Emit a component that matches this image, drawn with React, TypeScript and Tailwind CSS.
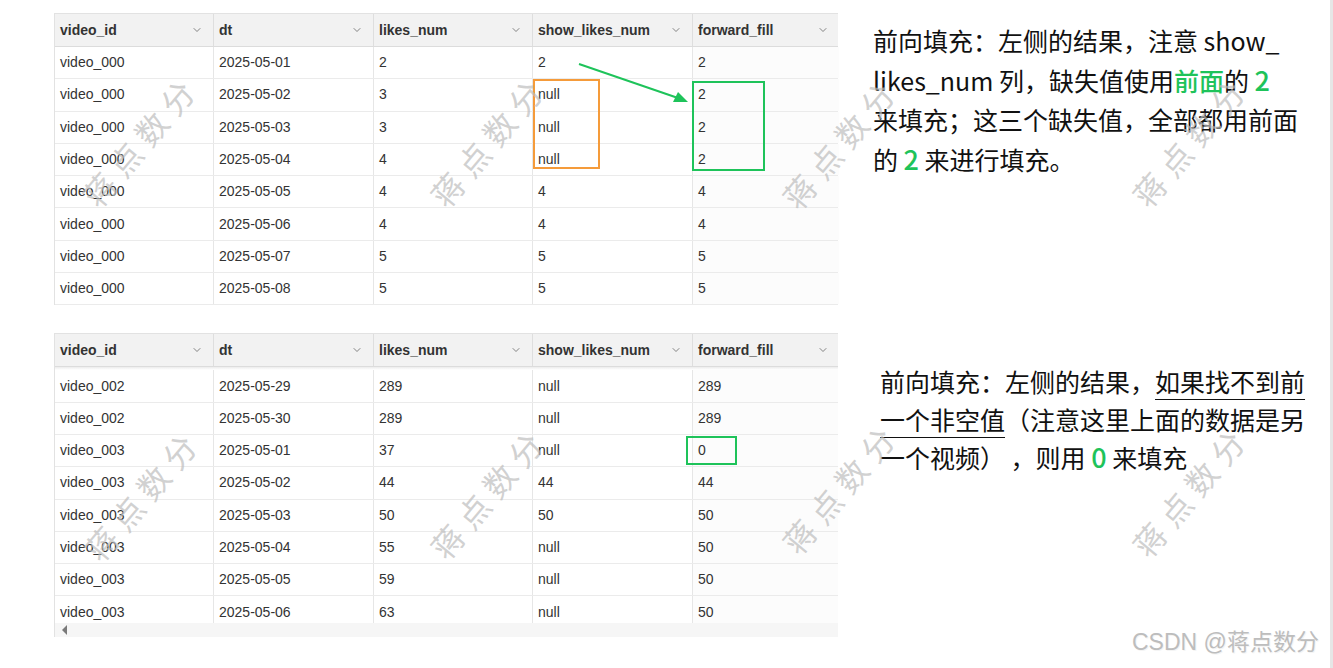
import { ChevronDown } from 'lucide-react';

type Row = [string, string, string, string, string];

const COLUMNS = ['video_id', 'dt', 'likes_num', 'show_likes_num', 'forward_fill'];
const WIDTHS = ['w-[159px]', 'w-[160px]', 'w-[159px]', 'w-[160px]', 'w-[146px]'];

const TOP_ROWS: Row[] = [
  ['video_000', '2025-05-01', '2', '2', '2'],
  ['video_000', '2025-05-02', '3', 'null', '2'],
  ['video_000', '2025-05-03', '3', 'null', '2'],
  ['video_000', '2025-05-04', '4', 'null', '2'],
  ['video_000', '2025-05-05', '4', '4', '4'],
  ['video_000', '2025-05-06', '4', '4', '4'],
  ['video_000', '2025-05-07', '5', '5', '5'],
  ['video_000', '2025-05-08', '5', '5', '5'],
];

const BOTTOM_ROWS: Row[] = [
  ['video_002', '2025-05-29', '289', 'null', '289'],
  ['video_002', '2025-05-30', '289', 'null', '289'],
  ['video_003', '2025-05-01', '37', 'null', '0'],
  ['video_003', '2025-05-02', '44', '44', '44'],
  ['video_003', '2025-05-03', '50', '50', '50'],
  ['video_003', '2025-05-04', '55', 'null', '50'],
  ['video_003', '2025-05-05', '59', 'null', '50'],
  ['video_003', '2025-05-06', '63', 'null', '50'],
];

const MARKS = [
  { x: 140, y: 140 }, { x: 488, y: 140 }, { x: 840, y: 142 }, { x: 1190, y: 140 },
  { x: 142, y: 494 }, { x: 488, y: 492 }, { x: 840, y: 487 }, { x: 1190, y: 490 },
];

function HeaderRow() {
  return (
    <div className="flex h-[33px] bg-[#f2f2f2] border-b border-[#dcdcdc]">
      {COLUMNS.map((c, i) => (
        <div
          key={c}
          className={`${WIDTHS[i]} shrink-0 flex items-center justify-between pl-[5px] pr-[10px] ${i < 4 ? 'border-r border-[#dedede]' : ''}`}
        >
          <span className="font-bold text-[14px] text-[#333]">{c}</span>
          <ChevronDown className="w-3 h-3 text-[#666]" strokeWidth={1.6} />
        </div>
      ))}
    </div>
  );
}

function BodyRow({ row }: { row: Row }) {
  return (
    <div className="flex h-[32.3px] border-b border-[#ebebeb] bg-white">
      {row.map((v, i) => (
        <div
          key={i}
          className={`${WIDTHS[i]} shrink-0 flex items-center pl-[5px] text-[14px] text-[#333] ${i < 4 ? 'border-r border-[#e6e6e6]' : 'bg-[#fcfcfc]'}`}
        >
          {v}
        </div>
      ))}
    </div>
  );
}

export default function App() {
  return (
    <div className="relative w-[1333px] h-[668px] overflow-hidden bg-white font-['Liberation_Sans',Arial,sans-serif]">
      <div className="flex h-full">
        <div className="flex-1 flex flex-col">
          {/* first table + note */}
          <div className="flex pt-[13px]">
            <div className="ml-[54px] w-[784px] border-l border-t border-[#e2e2e2]">
              <HeaderRow />
              {TOP_ROWS.map((r, i) => <BodyRow key={i} row={r} />)}
            </div>
            <div className="ml-[35px] mt-[8px] text-[25px] leading-[39px] text-[#111] font-['Noto_Sans_CJK_SC','Noto_Sans',sans-serif]">
              前向填充：左侧的结果，注意 show_<br />
              likes_num 列，缺失值使用<span className="text-[#1ec35a] font-medium">前面</span>的 <span className="text-[#1ec35a] text-[27px] font-medium">2</span><br />
              来填充；这三个缺失值，全部都用前面<br />
              的 <span className="text-[#1ec35a] text-[27px] font-medium">2</span> 来进行填充。
            </div>
          </div>

          {/* second table + note */}
          <div className="flex mt-[28px]">
            <div className="ml-[54px] w-[784px] border-l border-t border-[#e2e2e2]">
              <HeaderRow />
              <div className="h-[3px] bg-gradient-to-b from-[#ececec] to-white" />
              <div className="h-[253px] overflow-hidden">
                {BOTTOM_ROWS.map((r, i) => <BodyRow key={i} row={r} />)}
              </div>
              <div className="h-[14px] bg-[#f6f6f6] flex items-center pl-[7px]">
                <span className="w-0 h-0 border-y-[5px] border-y-transparent border-r-[5px] border-r-[#7a7a7a]" />
              </div>
            </div>
            <div className="ml-[42px] mt-[29px] text-[25px] leading-[38px] text-[#111] font-['Noto_Sans_CJK_SC','Noto_Sans',sans-serif]">
              前向填充：左侧的结果，<span className="underline decoration-1 underline-offset-[7px]">如果找不到前</span><br />
              <span className="underline decoration-1 underline-offset-[7px]">一个非空值</span>（注意这里上面的数据是另<br />
              一个视频）&nbsp;，则用 <span className="text-[#1ec35a] text-[27px] font-medium">0</span> 来填充
            </div>
          </div>
        </div>
        <div className="w-[3px] bg-[#e6e6e6]" />
      </div>

      {/* annotations */}
      <div className="absolute left-[533px] top-[79px] w-[67px] h-[90px] border-2 border-[#f59b3a]" />
      <div className="absolute left-[692px] top-[81px] w-[73px] h-[90px] border-2 border-[#1ec35a]" />
      <div className="absolute left-[686px] top-[436px] w-[51px] h-[29px] border-2 border-[#1ec35a]" />
      <svg className="absolute left-0 top-0" width="1333" height="668" viewBox="0 0 1333 668">
        <line x1="579" y1="64" x2="678" y2="98" stroke="#1ec35a" strokeWidth="2" />
        <polygon points="688,102 673,102 678,92" fill="#1ec35a" />
      </svg>

      {/* watermarks */}
      {MARKS.map((m, i) => (
        <div
          key={i}
          className="absolute -translate-x-1/2 -translate-y-1/2 -rotate-[50deg] whitespace-nowrap text-[32px] tracking-[8px] text-[#bdbdbd]/70 font-['Noto_Sans_CJK_SC',sans-serif]"
          style={{ left: m.x, top: m.y }}
        >
          蒋点数分
        </div>
      ))}

      <div className="absolute left-[1132px] top-[627px] whitespace-nowrap text-[23px] leading-[30px] text-[#bdbdbd] [text-shadow:1px_1px_0_#f4f4f4] font-['Liberation_Sans','Noto_Sans_CJK_SC',sans-serif]">
        CSDN @蒋点数分
      </div>
    </div>
  );
}
